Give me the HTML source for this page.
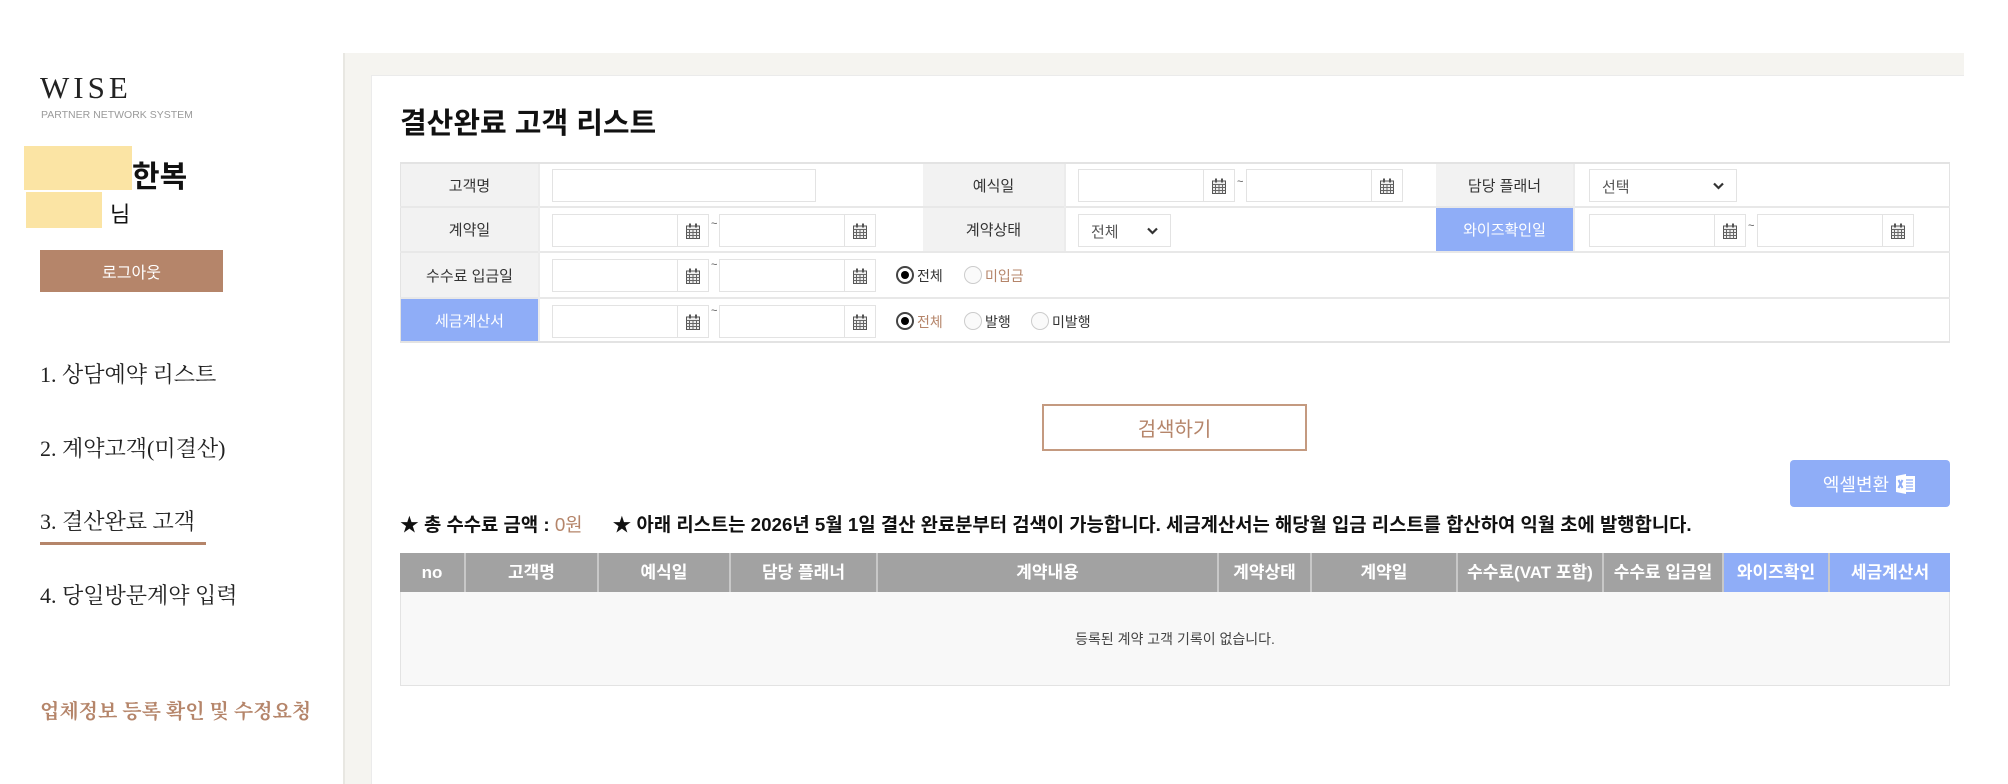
<!DOCTYPE html>
<html><head><meta charset="utf-8"><style>
*{margin:0;padding:0;box-sizing:border-box}
body{width:2008px;height:784px;position:relative;background:#fff;font-family:"Liberation Sans","Noto Sans CJK KR",sans-serif;color:#333;overflow:hidden}
.a{position:absolute}
.serif{font-family:"Liberation Serif","Noto Serif CJK SC",serif}
.lbl{position:absolute;background:#f2f2f2;display:flex;align-items:center;justify-content:center;font-size:15px;color:#333}
.blue{background:#8fadf7;color:#fff}
.inp{position:absolute;border:1px solid #e3e3e3;background:#fff;height:33px}
.date{position:absolute;border:1px solid #e3e3e3;background:#fff;height:33px;width:157px}
.date:after{content:"";position:absolute;right:30px;top:0;bottom:0;border-left:1px solid #e3e3e3}
.date svg{position:absolute;right:8px;top:8px}
.til{position:absolute;font-size:11px;color:#555}
.sel{position:absolute;border:1px solid #e3e3e3;background:#fff;height:33px;font-size:15px;color:#555;padding:6px 12px}
.sel svg{position:absolute;right:12px;top:12px}
.rad{position:absolute;width:18px;height:18px;border-radius:50%;border:1px solid #ccc;background:#fafafa}
.rad.on{border:2px solid #444;background:#fff}
.rad.on:after{content:"";position:absolute;left:3px;top:3px;width:8px;height:8px;border-radius:50%;background:#000}
.rt{position:absolute;font-size:14px}
.th{position:absolute;top:553px;height:39px;line-height:39px;text-align:center;background:#a2a2a2;color:#fff;font-weight:bold;font-size:17px;border-right:2px solid #c8c8c8;white-space:nowrap}
.th.b{background:#8fadf7}
</style></head><body>
<div class="a serif" style="left:40px;top:70px;font-size:31px;letter-spacing:4px;color:#222">WISE</div>
<div class="a" style="left:41px;top:109px;font-size:10.5px;color:#9a9a9a">PARTNER NETWORK SYSTEM</div>
<div class="a" style="left:24px;top:146px;width:108px;height:44px;background:#fbe4a4"></div>
<div class="a" style="left:132px;top:152px;font-size:30px;font-weight:bold;color:#111">한복</div>
<div class="a" style="left:26px;top:192px;width:76px;height:36px;background:#fbe4a4"></div>
<div class="a" style="left:110px;top:197px;font-size:22px;color:#111">님</div>
<div class="a" style="left:40px;top:250px;width:183px;height:42px;background:#b5856a;color:#fff;font-size:16px;display:flex;align-items:center;justify-content:center">로그아웃</div>
<div class="a serif" style="left:40px;top:358px;font-size:22px;color:#222">1. 상담예약 리스트</div>
<div class="a serif" style="left:40px;top:432px;font-size:22px;color:#222">2. 계약고객(미결산)</div>
<div class="a serif" style="left:40px;top:505px;font-size:22px;color:#222">3. 결산완료 고객</div>
<div class="a" style="left:40px;top:542px;width:166px;height:3px;background:#b5856a"></div>
<div class="a serif" style="left:40px;top:579px;font-size:22px;color:#222">4. 당일방문계약 입력</div>
<div class="a serif" style="left:40px;top:695px;font-size:20px;color:#b5856a;font-weight:bold">업체정보 등록 확인 및 수정요청</div>
<div class="a" style="left:343px;top:53px;width:1621px;height:731px;background:#f5f4f0;border-left:2px solid #e8e7e2"></div>
<div class="a" style="left:371px;top:75px;width:1593px;height:709px;background:#fff;border-top:1px solid #ebebeb;border-left:1px solid #ebebeb"></div>
<div class="a" style="left:400px;top:100px;font-size:29px;font-weight:bold;color:#111">결산완료 고객 리스트</div>
<div class="a" style="left:400px;top:162px;width:1550px;height:181px;border:1px solid #e3e3e3;border-width:2px 1px 2px 1px"></div>
<div class="a" style="left:400px;top:206px;width:1550px;height:2px;background:#e8e8e8"></div>
<div class="a" style="left:400px;top:251px;width:1550px;height:2px;background:#e8e8e8"></div>
<div class="a" style="left:400px;top:297px;width:1550px;height:2px;background:#e8e8e8"></div>
<div class="lbl" style="left:401px;top:164px;width:137px;height:42px">고객명</div>
<div class="lbl" style="left:401px;top:208px;width:137px;height:43px">계약일</div>
<div class="lbl" style="left:401px;top:253px;width:137px;height:44px">수수료 입금일</div>
<div class="lbl blue" style="left:401px;top:299px;width:137px;height:42px">세금계산서</div>
<div class="lbl" style="left:923px;top:164px;width:141px;height:42px">예식일</div>
<div class="lbl" style="left:923px;top:208px;width:141px;height:43px">계약상태</div>
<div class="lbl" style="left:1436px;top:164px;width:137px;height:42px">담당 플래너</div>
<div class="lbl blue" style="left:1436px;top:208px;width:137px;height:43px">와이즈확인일</div>
<div class="a" style="left:1064px;top:164px;width:2px;height:87px;background:#ececec"></div>
<div class="a" style="left:1573px;top:164px;width:2px;height:87px;background:#ececec"></div>
<div class="a" style="left:538px;top:164px;width:2px;height:177px;background:#ececec"></div>
<div class="inp" style="left:552px;top:169px;width:264px"></div>
<div class="date" style="left:552px;top:214px"><svg width="14" height="16" viewBox="0 0 14 16"><rect x="0.5" y="3" width="13" height="12.5" fill="#eee" stroke="#555"/><path d="M0.5 6.5h13M3.5 6.5v9M7 6.5v9M10.5 6.5v9M0.5 9.5h13M0.5 12.5h13" stroke="#666"/><rect x="3" y="0.5" width="2" height="4" fill="#555"/><rect x="9" y="0.5" width="2" height="4" fill="#555"/></svg></div>
<div class="til" style="left:711px;top:218px">~</div>
<div class="date" style="left:719px;top:214px"><svg width="14" height="16" viewBox="0 0 14 16"><rect x="0.5" y="3" width="13" height="12.5" fill="#eee" stroke="#555"/><path d="M0.5 6.5h13M3.5 6.5v9M7 6.5v9M10.5 6.5v9M0.5 9.5h13M0.5 12.5h13" stroke="#666"/><rect x="3" y="0.5" width="2" height="4" fill="#555"/><rect x="9" y="0.5" width="2" height="4" fill="#555"/></svg></div>
<div class="date" style="left:552px;top:259px"><svg width="14" height="16" viewBox="0 0 14 16"><rect x="0.5" y="3" width="13" height="12.5" fill="#eee" stroke="#555"/><path d="M0.5 6.5h13M3.5 6.5v9M7 6.5v9M10.5 6.5v9M0.5 9.5h13M0.5 12.5h13" stroke="#666"/><rect x="3" y="0.5" width="2" height="4" fill="#555"/><rect x="9" y="0.5" width="2" height="4" fill="#555"/></svg></div>
<div class="til" style="left:711px;top:259px">~</div>
<div class="date" style="left:719px;top:259px"><svg width="14" height="16" viewBox="0 0 14 16"><rect x="0.5" y="3" width="13" height="12.5" fill="#eee" stroke="#555"/><path d="M0.5 6.5h13M3.5 6.5v9M7 6.5v9M10.5 6.5v9M0.5 9.5h13M0.5 12.5h13" stroke="#666"/><rect x="3" y="0.5" width="2" height="4" fill="#555"/><rect x="9" y="0.5" width="2" height="4" fill="#555"/></svg></div>
<div class="date" style="left:552px;top:305px"><svg width="14" height="16" viewBox="0 0 14 16"><rect x="0.5" y="3" width="13" height="12.5" fill="#eee" stroke="#555"/><path d="M0.5 6.5h13M3.5 6.5v9M7 6.5v9M10.5 6.5v9M0.5 9.5h13M0.5 12.5h13" stroke="#666"/><rect x="3" y="0.5" width="2" height="4" fill="#555"/><rect x="9" y="0.5" width="2" height="4" fill="#555"/></svg></div>
<div class="til" style="left:711px;top:305px">~</div>
<div class="date" style="left:719px;top:305px"><svg width="14" height="16" viewBox="0 0 14 16"><rect x="0.5" y="3" width="13" height="12.5" fill="#eee" stroke="#555"/><path d="M0.5 6.5h13M3.5 6.5v9M7 6.5v9M10.5 6.5v9M0.5 9.5h13M0.5 12.5h13" stroke="#666"/><rect x="3" y="0.5" width="2" height="4" fill="#555"/><rect x="9" y="0.5" width="2" height="4" fill="#555"/></svg></div>
<div class="date" style="left:1078px;top:169px"><svg width="14" height="16" viewBox="0 0 14 16"><rect x="0.5" y="3" width="13" height="12.5" fill="#eee" stroke="#555"/><path d="M0.5 6.5h13M3.5 6.5v9M7 6.5v9M10.5 6.5v9M0.5 9.5h13M0.5 12.5h13" stroke="#666"/><rect x="3" y="0.5" width="2" height="4" fill="#555"/><rect x="9" y="0.5" width="2" height="4" fill="#555"/></svg></div>
<div class="til" style="left:1237px;top:176px">~</div>
<div class="date" style="left:1246px;top:169px"><svg width="14" height="16" viewBox="0 0 14 16"><rect x="0.5" y="3" width="13" height="12.5" fill="#eee" stroke="#555"/><path d="M0.5 6.5h13M3.5 6.5v9M7 6.5v9M10.5 6.5v9M0.5 9.5h13M0.5 12.5h13" stroke="#666"/><rect x="3" y="0.5" width="2" height="4" fill="#555"/><rect x="9" y="0.5" width="2" height="4" fill="#555"/></svg></div>
<div class="date" style="left:1589px;top:214px"><svg width="14" height="16" viewBox="0 0 14 16"><rect x="0.5" y="3" width="13" height="12.5" fill="#eee" stroke="#555"/><path d="M0.5 6.5h13M3.5 6.5v9M7 6.5v9M10.5 6.5v9M0.5 9.5h13M0.5 12.5h13" stroke="#666"/><rect x="3" y="0.5" width="2" height="4" fill="#555"/><rect x="9" y="0.5" width="2" height="4" fill="#555"/></svg></div>
<div class="til" style="left:1748px;top:220px">~</div>
<div class="date" style="left:1757px;top:214px"><svg width="14" height="16" viewBox="0 0 14 16"><rect x="0.5" y="3" width="13" height="12.5" fill="#eee" stroke="#555"/><path d="M0.5 6.5h13M3.5 6.5v9M7 6.5v9M10.5 6.5v9M0.5 9.5h13M0.5 12.5h13" stroke="#666"/><rect x="3" y="0.5" width="2" height="4" fill="#555"/><rect x="9" y="0.5" width="2" height="4" fill="#555"/></svg></div>
<div class="sel" style="left:1589px;top:169px;width:148px">선택<svg width="11" height="8" viewBox="0 0 11 8"><path d="M1 1.5l4.5 4.5 4.5-4.5" fill="none" stroke="#333" stroke-width="2.2"/></svg></div>
<div class="sel" style="left:1078px;top:214px;width:93px">전체<svg width="11" height="8" viewBox="0 0 11 8"><path d="M1 1.5l4.5 4.5 4.5-4.5" fill="none" stroke="#333" stroke-width="2.2"/></svg></div>
<div class="rad on" style="left:896px;top:266px"></div><div class="rt" style="left:917px;top:266px;color:#333">전체</div>
<div class="rad" style="left:964px;top:266px"></div><div class="rt" style="left:985px;top:266px;color:#b5856a">미입금</div>
<div class="rad on" style="left:896px;top:312px"></div><div class="rt" style="left:917px;top:312px;color:#b5856a">전체</div>
<div class="rad" style="left:964px;top:312px"></div><div class="rt" style="left:985px;top:312px;color:#333">발행</div>
<div class="rad" style="left:1031px;top:312px"></div><div class="rt" style="left:1052px;top:312px;color:#333">미발행</div>
<div class="a" style="left:1042px;top:404px;width:265px;height:47px;border:2px solid #c49a80;color:#b5856a;font-size:20px;display:flex;align-items:center;justify-content:center">검색하기</div>
<div class="a" style="left:1790px;top:460px;width:160px;height:47px;background:#8fadf7;border-radius:4px;color:#fff;font-size:18px;display:flex;align-items:center;justify-content:center;gap:6px">엑셀변환<svg width="22" height="22" viewBox="0 0 22 22"><rect x="9" y="3" width="11" height="16" fill="#fff"/><path d="M11 7h7M11 10h7M11 13h7M11 16h7" stroke="#8fadf7" stroke-width="1.2"/><path d="M1 3l10-2v20L1 19z" fill="#fff"/><path d="M3.5 7l4 8M7.5 7l-4 8" stroke="#8fadf7" stroke-width="2"/></svg></div>
<div class="a" style="left:400px;top:510px;font-size:18.8px;font-weight:bold;color:#111;white-space:nowrap">★ 총 수수료 금액 : <span style="color:#b5856a;font-weight:normal">0원</span><span style="margin-left:30px">★ 아래 리스트는 2026년 5월 1일 결산 완료분부터 검색이 가능합니다. 세금계산서는 해당월 입금 리스트를 합산하여 익월 초에 발행합니다.</span></div>
<div class="th" style="left:400px;width:66px">no</div>
<div class="th" style="left:466px;width:133px">고객명</div>
<div class="th" style="left:599px;width:132px">예식일</div>
<div class="th" style="left:731px;width:147px">담당 플래너</div>
<div class="th" style="left:878px;width:341px">계약내용</div>
<div class="th" style="left:1219px;width:93px">계약상태</div>
<div class="th" style="left:1312px;width:146px">계약일</div>
<div class="th" style="left:1458px;width:146px">수수료(VAT 포함)</div>
<div class="th" style="left:1604px;width:120px">수수료 입금일</div>
<div class="th b" style="left:1724px;width:106px">와이즈확인</div>
<div class="th b" style="left:1830px;width:120px;border-right:none">세금계산서</div>
<div class="a" style="left:400px;top:592px;width:1550px;height:94px;background:#f8f8f8;border:1px solid #e3e3e3;border-top:none;display:flex;align-items:center;justify-content:center;font-size:14px;color:#444">등록된 계약 고객 기록이 없습니다.</div>
</body></html>
